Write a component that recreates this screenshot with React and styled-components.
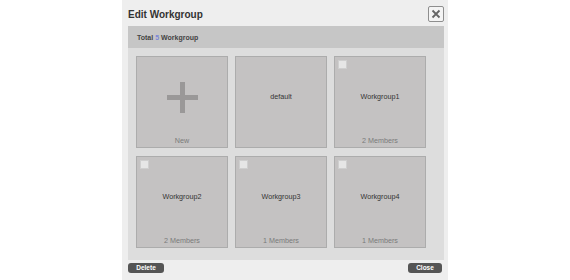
import styled, { createGlobalStyle } from "styled-components";

const GlobalStyle = createGlobalStyle`
  body {
    margin: 0;
    background: #ffffff;
    font-family: Arial, "Liberation Sans", sans-serif;
  }
`;

const Dialog = styled.div`
  width: 326px;
  height: 280px;
  margin: 0 auto;
  padding: 0 4px 0 6px;
  box-sizing: border-box;
  background: #eeeeee;
  display: flex;
  flex-direction: column;
`;

const TitleBar = styled.div`
  height: 26px;
  display: flex;
  align-items: center;
  justify-content: space-between;
`;

const Title = styled.h3`
  margin: 3px 0 0;
  font-size: 10px;
  font-weight: bold;
  color: #333333;
`;

const CloseX = styled.button`
  width: 16px;
  height: 16px;
  padding: 0;
  margin-top: 1px;
  border: 1px solid #8e8e8e;
  border-radius: 2px;
  background: #f4f4f4;
  display: flex;
  align-items: center;
  justify-content: center;
`;

const Summary = styled.div`
  height: 22px;
  background: #c6c6c6;
  display: flex;
  align-items: center;
  padding-left: 9px;
  font-size: 7px;
  font-weight: bold;
  color: #444444;
`;

const Count = styled.span`
  color: #7b86d8;
  margin: 0 2px;
`;

const Panel = styled.div`
  height: 212px;
  background: #dddddd;
  padding: 8px;
  box-sizing: border-box;
  display: grid;
  grid-template-columns: repeat(3, 92px);
  grid-auto-rows: 92px;
  gap: 8px 7px;
`;

const Tile = styled.div`
  position: relative;
  background: #c4c2c2;
  border: 1px solid #acacac;
  box-sizing: border-box;
  display: flex;
  flex-direction: column;
  align-items: center;
  justify-content: space-between;
`;

const Check = styled.span`
  position: absolute;
  left: 3px;
  top: 3px;
  width: 9px;
  height: 9px;
  background: #e6e6e6;
  border: 1px solid #cfcfcf;
  box-sizing: border-box;
`;

const Name = styled.div`
  flex: 1;
  display: flex;
  align-items: center;
  font-size: 7.2px;
  color: #333333;
`;

const Meta = styled.div`
  height: 11px;
  font-size: 7.2px;
  color: #7a7a7a;
`;

const Plus = styled.div`
  flex: 1;
  display: flex;
  align-items: center;
  padding-top: 2px;
`;

const Footer = styled.div`
  flex: 1;
  display: flex;
  justify-content: space-between;
  align-items: flex-start;
  padding-top: 3px;
  padding-right: 2px;
`;

const ActionButton = styled.button`
  height: 10px;
  width: ${({ $w }) => $w}px;
  padding: 0;
  border: none;
  border-radius: 3px;
  background: #555555;
  color: #ffffff;
  font-family: Arial, "Liberation Sans", sans-serif;
  font-size: 6.5px;
  font-weight: bold;
  line-height: 10px;
`;

const groups = [
  { name: "Workgroup1", members: 2 },
  { name: "Workgroup2", members: 2 },
  { name: "Workgroup3", members: 1 },
  { name: "Workgroup4", members: 1 },
];

export default function App() {
  return (
    <>
      <GlobalStyle />
      <Dialog>
        <TitleBar>
          <Title>Edit Workgroup</Title>
          <CloseX>
            <svg width="10" height="10" viewBox="0 0 10 10">
              <path d="M1.5 1.5 L8.5 8.5 M8.5 1.5 L1.5 8.5" stroke="#666" strokeWidth="1.8" />
            </svg>
          </CloseX>
        </TitleBar>
        <Summary>
          Total<Count>5</Count>Workgroup
        </Summary>
        <Panel>
          <Tile>
            <Plus>
              <svg width="31" height="31" viewBox="0 0 31 31">
                <rect x="13" y="0" width="5" height="31" fill="#9a9898" />
                <rect x="0" y="13" width="31" height="5" fill="#9a9898" />
              </svg>
            </Plus>
            <Meta>New</Meta>
          </Tile>
          <Tile>
            <Name>default</Name>
            <Meta />
          </Tile>
          {groups.map((g) => (
            <Tile key={g.name}>
              <Check />
              <Name>{g.name}</Name>
              <Meta>{g.members} Members</Meta>
            </Tile>
          ))}
        </Panel>
        <Footer>
          <ActionButton $w={36}>Delete</ActionButton>
          <ActionButton $w={34}>Close</ActionButton>
        </Footer>
      </Dialog>
    </>
  );
}
